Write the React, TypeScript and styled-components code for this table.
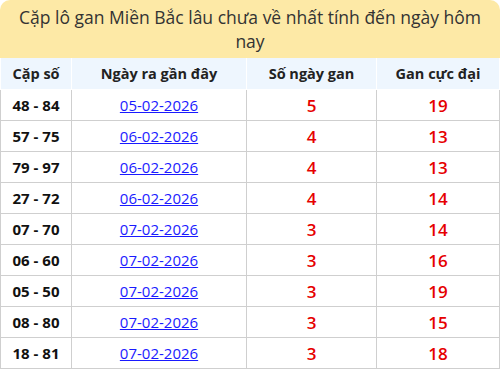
import styled, { createGlobalStyle } from 'styled-components';

const rows = [
  { pair: '48 - 84', date: '05-02-2026', days: 5, max: 19 },
  { pair: '57 - 75', date: '06-02-2026', days: 4, max: 13 },
  { pair: '79 - 97', date: '06-02-2026', days: 4, max: 13 },
  { pair: '27 - 72', date: '06-02-2026', days: 4, max: 14 },
  { pair: '07 - 70', date: '07-02-2026', days: 3, max: 14 },
  { pair: '06 - 60', date: '07-02-2026', days: 3, max: 16 },
  { pair: '05 - 50', date: '07-02-2026', days: 3, max: 19 },
  { pair: '08 - 80', date: '07-02-2026', days: 3, max: 15 },
  { pair: '18 - 81', date: '07-02-2026', days: 3, max: 18 },
];

function App() {
  return (
    <>
      <GlobalStyle />
      <Wrapper>
        <Title>Cặp lô gan Miền Bắc lâu chưa về nhất tính đến ngày hôm nay</Title>
        <Table>
          <colgroup>
            <col style={{ width: 71 }} />
            <col style={{ width: 175 }} />
            <col style={{ width: 130 }} />
            <col />
          </colgroup>
          <thead>
            <tr>
              <Th>Cặp số</Th>
              <Th>Ngày ra gần đây</Th>
              <Th>Số ngày gan</Th>
              <Th>Gan cực đại</Th>
            </tr>
          </thead>
          <tbody>
            {rows.map((r) => (
              <tr key={r.pair}>
                <Td>
                  <Pair>{r.pair}</Pair>
                </Td>
                <Td>
                  <DateLink href="#">{r.date}</DateLink>
                </Td>
                <Td>
                  <Num>{r.days}</Num>
                </Td>
                <Td>
                  <Num>{r.max}</Num>
                </Td>
              </tr>
            ))}
          </tbody>
        </Table>
      </Wrapper>
    </>
  );
}

export default App;

const GlobalStyle = createGlobalStyle`
  body {
    margin: 0;
    background: #fff;
    font-family: 'Open Sans', 'Liberation Sans', sans-serif;
  }
`;

const Wrapper = styled.div`
  width: 500px;
`;

const Title = styled.h2`
  margin: 0;
  height: 58px;
  box-sizing: border-box;
  padding: 5px 12px 0;
  background: #fde9a6;
  border-radius: 10px 10px 0 0;
  text-align: center;
  font-size: 17.5px;
  line-height: 24px;
  font-weight: 500;
  color: #333;
`;

const Table = styled.table`
  width: 500px;
  border-collapse: collapse;
  table-layout: fixed;
`;

const Th = styled.th`
  height: 31px;
  padding: 0;
  background: #eef6fe;
  border: 1px solid #fff;
  border-top: none;
  font-size: 14.5px;
  font-weight: 700;
  color: #222;
  text-align: center;
`;

const Td = styled.td`
  height: 30px;
  padding: 0;
  border: 1px solid #cfcfcf;
  text-align: center;
`;

const Pair = styled.span`
  font-size: 15px;
  font-weight: 700;
  color: #111;
`;

const DateLink = styled.a`
  font-size: 15px;
  color: #1a1aff;
  text-decoration: underline;
`;

const Num = styled.span`
  font-size: 17px;
  font-weight: 600;
  color: #e60000;
`;
